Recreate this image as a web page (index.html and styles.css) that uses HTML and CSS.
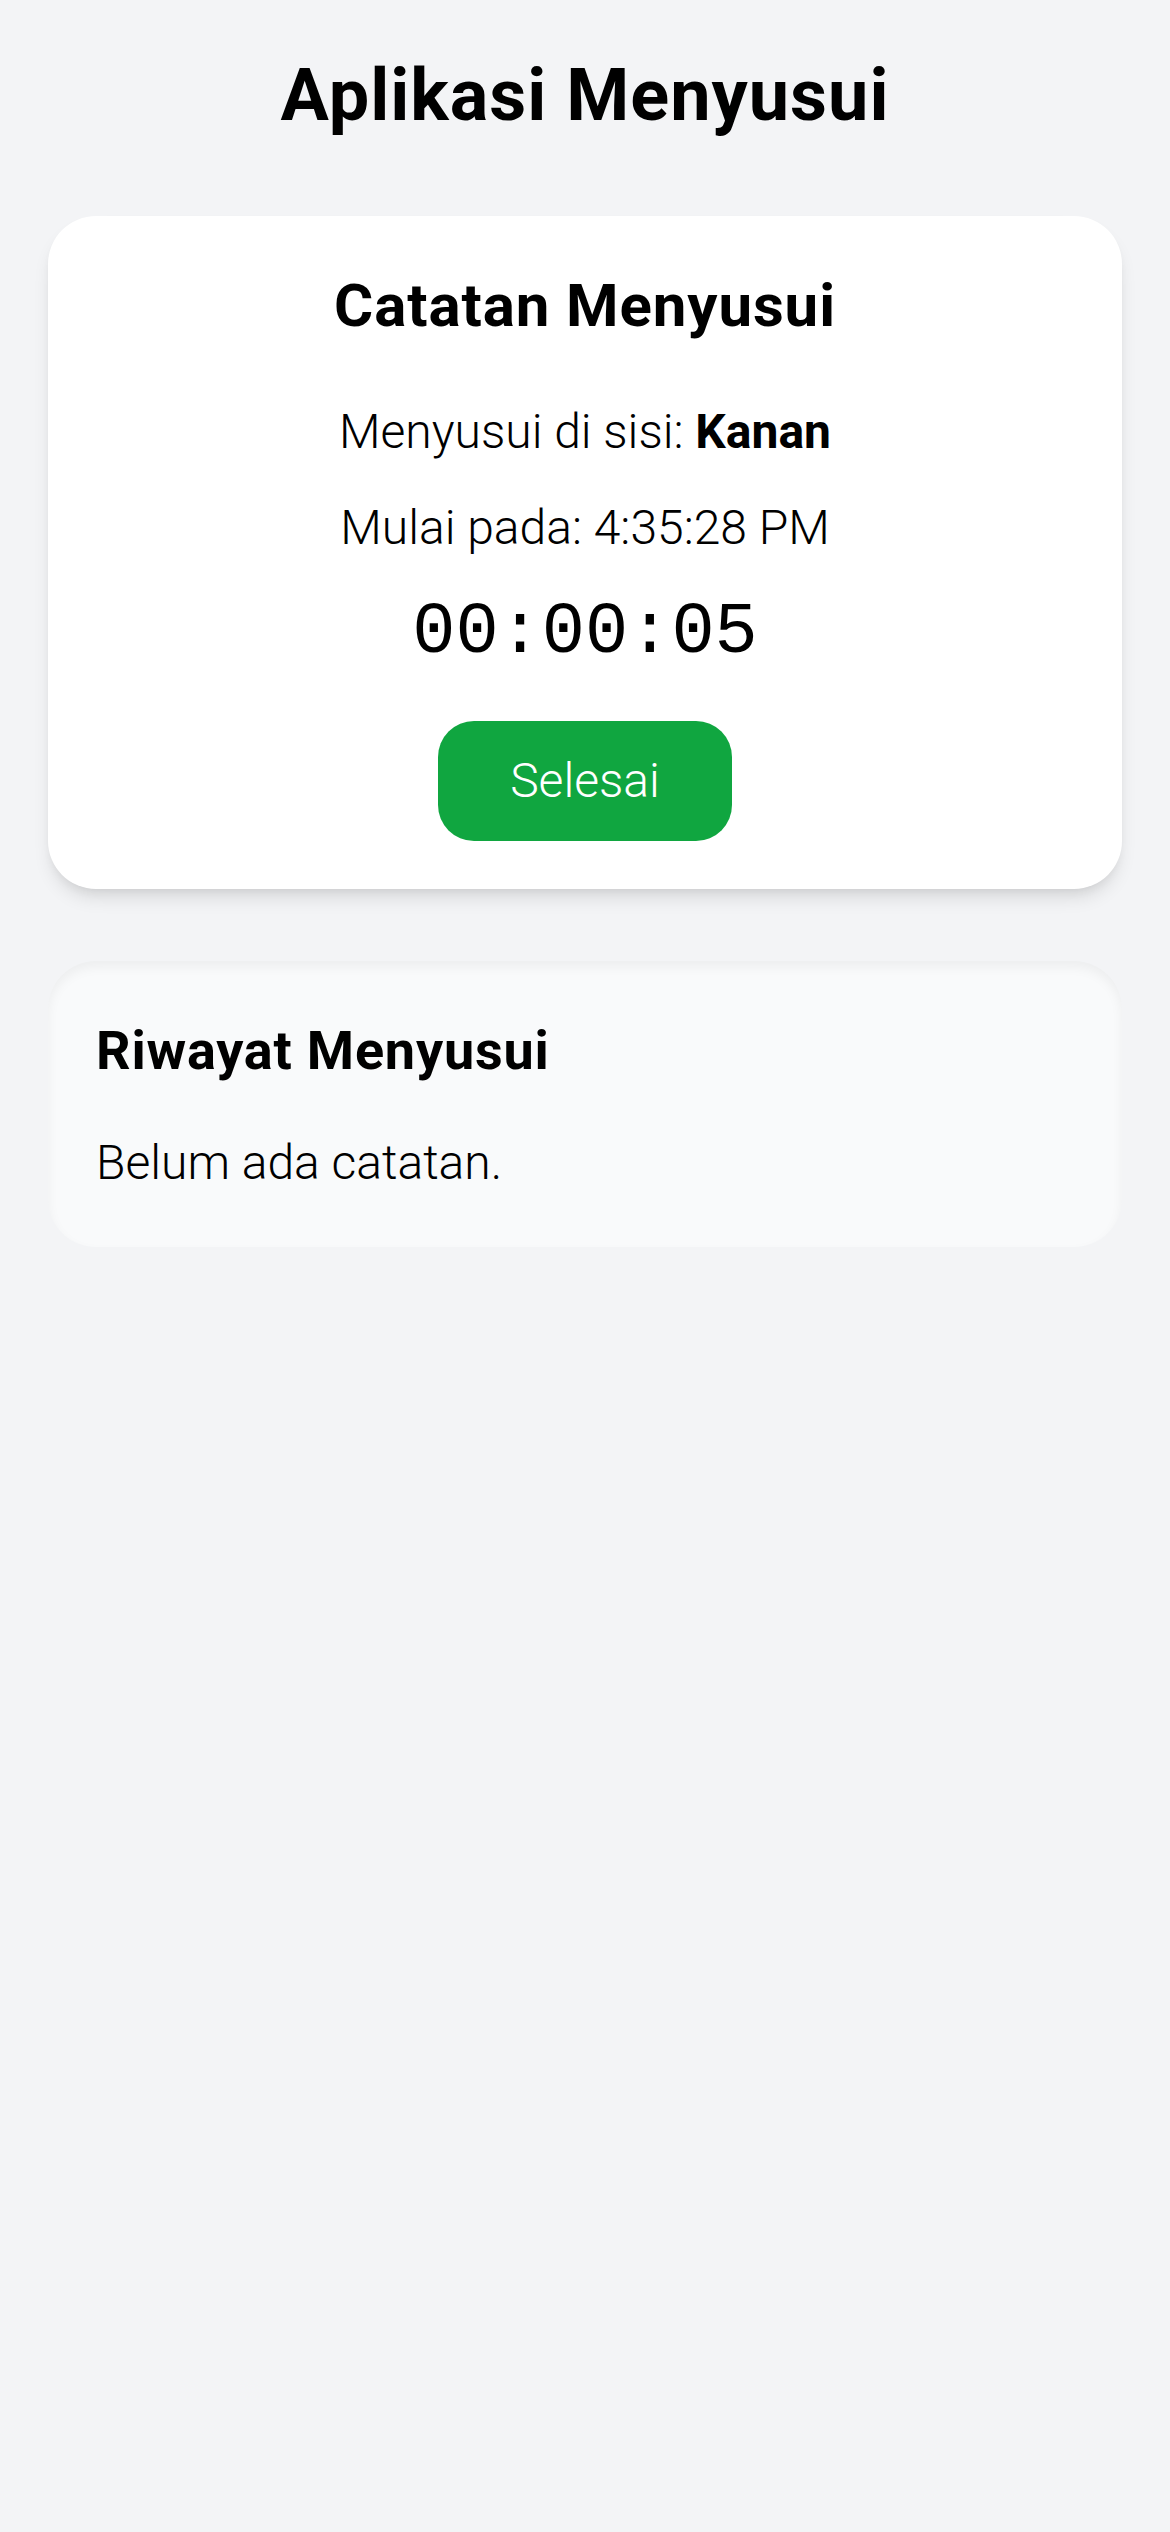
FILE: index.html
```html
<!DOCTYPE html>
<html lang="id">
<head>
<meta charset="utf-8">
<title>Aplikasi Menyusui</title>
<link rel="stylesheet" href="styles.css">
</head>
<body>
<main class="app">
  <h1 class="app-title">Aplikasi Menyusui</h1>
  <section class="card card-session">
    <h2 class="card-title">Catatan Menyusui</h2>
    <p class="side">Menyusui di sisi: <strong>Kanan</strong></p>
    <p class="start">Mulai pada: 4:35:28 PM</p>
    <div class="timer">00:00:05</div>
    <button class="btn-finish" type="button">Selesai</button>
  </section>
  <section class="card card-history">
    <h2 class="history-title">Riwayat Menyusui</h2>
    <p class="empty">Belum ada catatan.</p>
  </section>
</main>
</body>
</html>
```
FILE: styles.css
```css
html, body {
  margin: 0;
  padding: 0;
}
body {
  background: #f3f4f6;
  font-family: Roboto, "Noto Sans", sans-serif;
  color: #000;
  min-height: 2532px;
}
.app {
  padding: 48px;
  display: flex;
  flex-direction: column;
}
.app-title {
  margin: 0 0 72px;
  font-size: 72px;
  line-height: 96px;
  font-weight: 700;
  text-align: center;
  letter-spacing: 1px;
}
.card {
  border-radius: 48px;
  padding: 48px;
}
.card-session {
  background: #fff;
  box-shadow: 0 12px 18px -3px rgba(0,0,0,0.1), 0 6px 12px -6px rgba(0,0,0,0.1);
  display: flex;
  flex-direction: column;
  align-items: center;
  text-align: center;
}
.card-title {
  margin: 0 0 48px;
  font-size: 60px;
  line-height: 84px;
  font-weight: 700;
  letter-spacing: 0.9px;
}
.side, .start {
  margin: 0;
  font-size: 48px;
  line-height: 72px;
  font-weight: 300;
}
.side strong {
  font-weight: 700;
}
.start {
  margin-top: 24px;
}
.timer {
  margin-top: 21px;
  font-family: "Liberation Mono", monospace;
  font-size: 72px;
  line-height: 96px;
}
.btn-finish {
  margin-top: 40px;
  border: 0;
  background: #10a640;
  color: #fff;
  font-family: Roboto, "Noto Sans", sans-serif;
  font-size: 48px;
  line-height: 72px;
  font-weight: 300;
  padding: 24px 72px;
  border-radius: 36px;
}
.card-history {
  margin-top: 72px;
  background: #f9fafb;
  box-shadow: inset 0 6px 12px rgba(0,0,0,0.05);
}
.history-title {
  margin: 0 0 34px;
  font-size: 54px;
  line-height: 84px;
  font-weight: 700;
  letter-spacing: 0.8px;
}
.empty {
  margin: 0;
  font-size: 48px;
  line-height: 72px;
  font-weight: 300;
}
```
